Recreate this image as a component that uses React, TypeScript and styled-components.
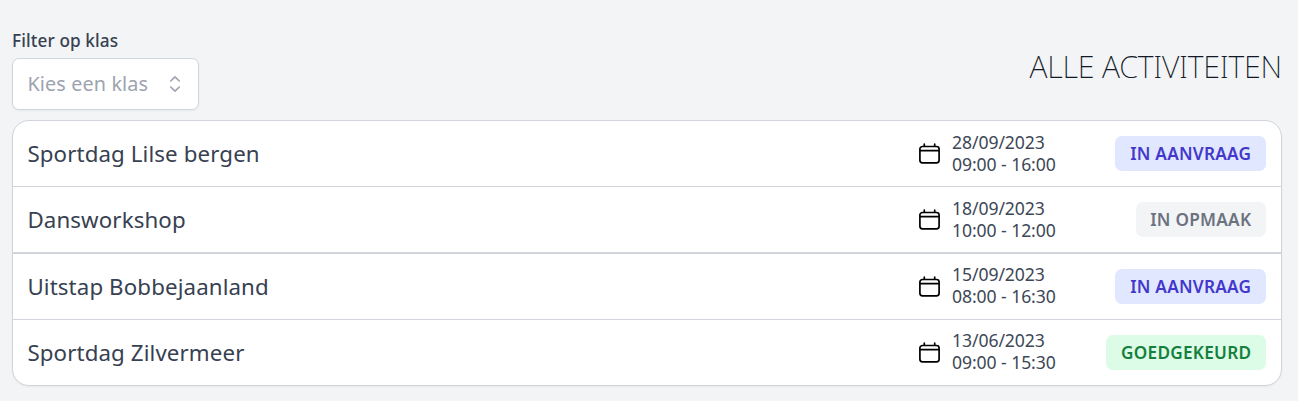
import React from "react";
import styled, { createGlobalStyle, css } from "styled-components";

const GlobalStyle = createGlobalStyle`
  *, *::before, *::after { box-sizing: border-box; }
  body {
    margin: 0;
    background: #f3f4f6;
    color: #374151;
    font-family: "Noto Sans", sans-serif;
  }
`;

const Page = styled.main`
  min-height: 100vh;
  padding: 28px 16px 15px 12px;
`;

const Header = styled.header`
  display: flex;
  justify-content: space-between;
  align-items: flex-start;
  height: 92px;
`;

const Filter = styled.div`
  display: flex;
  flex-direction: column;
  align-items: flex-start;
`;

const Label = styled.label`
  font-size: 17.2px;
  font-weight: 500;
  letter-spacing: 0.12px;
  line-height: 26px;
  margin-bottom: 4px;
`;

const Select = styled.button`
  display: flex;
  align-items: center;
  justify-content: space-between;
  width: 187px;
  height: 52px;
  padding: 0 12.7px 2px 14.5px;
  background: #fff;
  border: 1px solid #d1d5db;
  border-radius: 7px;
  box-shadow: 0 1px 2px rgba(0, 0, 0, 0.05);
  color: #9ca3af;
  font: 400 19.8px/31px "Noto Sans", sans-serif;
  letter-spacing: 0.12px;

  svg {
    margin-top: 2px;
  }
`;

const Heading = styled.h1`
  margin: 19px 0 0;
  color: #111827;
  font-size: 30.4px;
  font-weight: 200;
  letter-spacing: -0.2px;
  line-height: 40px;
  text-transform: uppercase;
`;

const List = styled.ul`
  margin: 0;
  padding: 0;
  list-style: none;
  background: #fff;
  border: 1px solid #d1d5db;
  border-radius: 17px;
  box-shadow: 0 1px 2px rgba(0, 0, 0, 0.05);
  overflow: hidden;
`;

const Title = styled.span`
  flex: 1;
  font-size: 22.3px;
  letter-spacing: 0.11px;
  line-height: 31px;
`;

const Schedule = styled.div`
  display: flex;
  align-items: center;
  gap: 9px;
  width: 149px;
`;

const Times = styled.div`
  padding-bottom: 2px;
  color: #3d4756;
  font-size: 17.6px;
  font-weight: 400;
  letter-spacing: -0.08px;
  line-height: 22px;
  white-space: nowrap;
`;

const Row = styled.li<{ $divider: number }>`
  display: flex;
  align-items: center;
  box-sizing: content-box;
  height: 65px;
  padding: 0 15px 0 14.4px;
  border-bottom: ${({ $divider }) => $divider}px solid #d1d5db;

  &:nth-child(n + 3) ${Times} {
    padding-bottom: 4px;
  }
`;

const StatusCell = styled.div`
  display: flex;
  justify-content: flex-end;
  width: 200px;
`;

type Tone = "requested" | "draft" | "approved";

const tones = {
  requested: css`background: #e0e7ff; color: #4338ca;`,
  draft: css`background: #f3f4f6; color: #6b7280;`,
  approved: css`background: #dcfce7; color: #15803d;`,
};

const Badge = styled.span<{ $tone: Tone }>`
  padding: 0 14.7px;
  border-radius: 7px;
  font-size: 17.2px;
  font-weight: 600;
  letter-spacing: 0.26px;
  line-height: 35px;
  text-transform: uppercase;
  white-space: nowrap;
  ${({ $tone }) => tones[$tone]}
`;

const CalendarIcon = () => (
  <svg width="26" height="26" viewBox="0 0 26 26" fill="none" stroke="#000" strokeWidth="1.7" strokeLinecap="round" strokeLinejoin="round" aria-hidden="true">
    <path d="M5.5 5.5h14a2.6 2.6 0 0 1 2.6 2.6v11.2a2.6 2.6 0 0 1-2.6 2.6h-14a2.6 2.6 0 0 1-2.6-2.6V8.1a2.6 2.6 0 0 1 2.6-2.6zM2.9 9.6h19.2M7.3 3.2v2M17.7 3.2v2" />
  </svg>
);

const SelectorIcon = () => (
  <svg width="20" height="22" viewBox="0 0 20 22" fill="none" stroke="#9ca3af" strokeWidth="1.6" strokeLinecap="round" strokeLinejoin="round" aria-hidden="true">
    <path d="M5.7 8 10 3.9 14.3 8M5.7 14 10 18.1 14.3 14" />
  </svg>
);

const activities: { title: string; date: string; time: string; status: string; tone: Tone; divider: number }[] = [
  { title: "Sportdag Lilse bergen", date: "28/09/2023", time: "09:00 - 16:00", status: "In aanvraag", tone: "requested", divider: 1 },
  { title: "Dansworkshop", date: "18/09/2023", time: "10:00 - 12:00", status: "In opmaak", tone: "draft", divider: 2 },
  { title: "Uitstap Bobbejaanland", date: "15/09/2023", time: "08:00 - 16:30", status: "In aanvraag", tone: "requested", divider: 1 },
  { title: "Sportdag Zilvermeer", date: "13/06/2023", time: "09:00 - 15:30", status: "Goedgekeurd", tone: "approved", divider: 0 },
];

export default function App() {
  return (
    <>
      <GlobalStyle />
      <Page>
        <Header>
          <Filter>
            <Label htmlFor="class-filter">Filter op klas</Label>
            <Select id="class-filter" type="button">
              Kies een klas
              <SelectorIcon />
            </Select>
          </Filter>
          <Heading>Alle activiteiten</Heading>
        </Header>
        <List>
          {activities.map((a) => (
            <Row key={a.title} $divider={a.divider}>
              <Title>{a.title}</Title>
              <Schedule>
                <CalendarIcon />
                <Times>
                  <div>{a.date}</div>
                  <div>{a.time}</div>
                </Times>
              </Schedule>
              <StatusCell>
                <Badge $tone={a.tone}>{a.status}</Badge>
              </StatusCell>
            </Row>
          ))}
        </List>
      </Page>
    </>
  );
}
